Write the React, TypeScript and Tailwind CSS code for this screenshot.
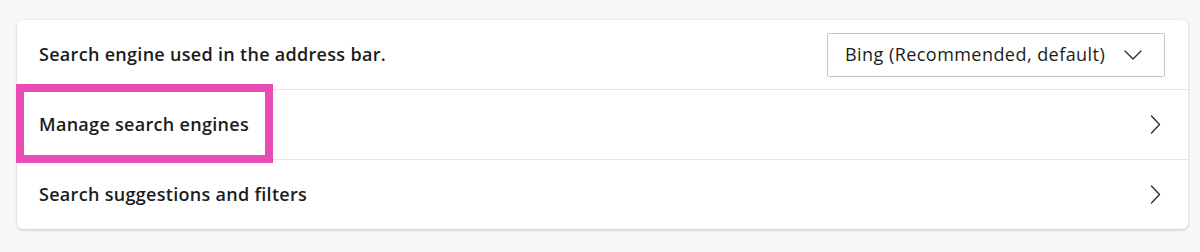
function ChevronRight() {
  return (
    <svg width="11" height="19" viewBox="0 0 11 19" fill="none" className="text-[#2b2b2b]">
      <polyline points="1.5,1 9.5,9.5 1.5,18" stroke="currentColor" strokeWidth="1.3" strokeLinecap="round" strokeLinejoin="round" />
    </svg>
  )
}

function ChevronDown() {
  return (
    <svg width="18" height="10" viewBox="0 0 18 10" fill="none" className="text-[#2b2b2b]">
      <polyline points="1,1 9,9 17,1" stroke="currentColor" strokeWidth="1.3" strokeLinecap="round" strokeLinejoin="round" />
    </svg>
  )
}

function LinkRow({ label, highlight }: { label: string; highlight?: boolean }) {
  return (
    <div className="relative flex h-[70px] items-center justify-between border-t border-[#e8e8e8] pl-[22px] pr-[27px]">
      <span className="text-[18px] font-semibold tracking-[0.3px] text-[#1c1c1c]">{label}</span>
      <ChevronRight />
      {highlight && (
        <div className="pointer-events-none absolute left-[-1px] top-[-6px] z-10 h-[79px] w-[257px] border-[8px] border-[#e94bb7]" />
      )}
    </div>
  )
}

export default function App() {
  return (
    <div
      className="min-h-[252px] bg-[#f7f7f7] pl-[17px] pt-5"
      style={{ fontFamily: '"Open Sans", "Noto Sans", sans-serif' }}
    >
      <div className="w-[1171px] rounded-md bg-white shadow-[0_1px_3px_rgba(0,0,0,0.2)]">
        <div className="flex h-[69px] items-center justify-between pl-[22px] pr-[23px]">
          <span className="text-[18px] font-semibold tracking-[0.3px] text-[#1c1c1c]">Search engine used in the address bar.</span>
          <button className="flex h-[44px] w-[338px] items-center justify-between rounded-[2px] border border-[#c4c4c4] bg-white pl-[17px] pr-[22px] text-[18px] tracking-[0.45px] text-[#1c1c1c]">
            <span>Bing (Recommended, default)</span>
            <ChevronDown />
          </button>
        </div>
        <LinkRow label="Manage search engines" highlight />
        <LinkRow label="Search suggestions and filters" />
      </div>
    </div>
  )
}
